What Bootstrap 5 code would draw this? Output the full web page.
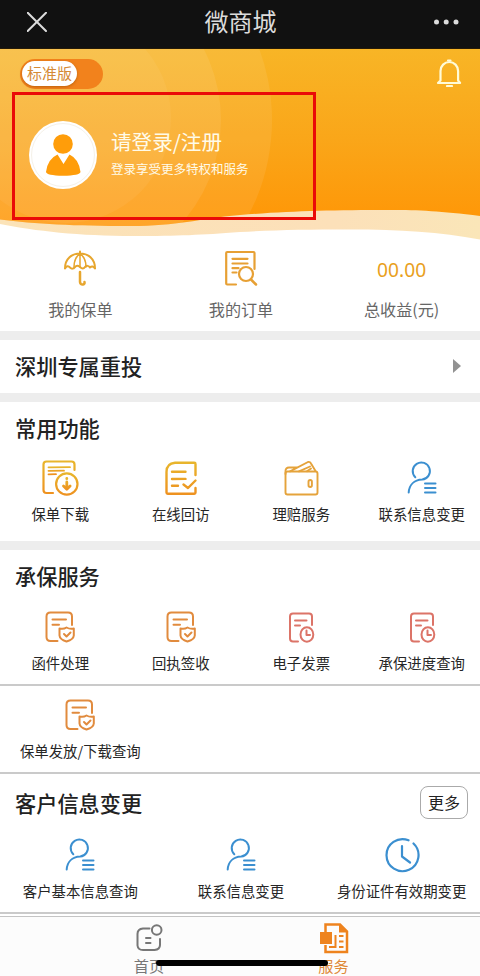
<!DOCTYPE html>
<html lang="zh-CN">
<head>
<meta charset="utf-8">
<meta name="viewport" content="width=device-width, initial-scale=1">
<title>微商城</title>
<link href="https://cdn.jsdelivr.net/npm/bootstrap@5.3.0/dist/css/bootstrap.min.css" rel="stylesheet">
<style>
body{font-family:"Noto Sans CJK SC",sans-serif;color:#262626;background:#fff;width:480px;height:976px;overflow:hidden;line-height:1.2}
svg{display:block;flex:none}
.ln{fill:none;stroke-linecap:round;stroke-linejoin:round}
.topbar{height:49px;background:#111;color:#dcdcdc;padding:0 21px 5px 27px;border-bottom:1px solid #241a08}
.topbar h1{font-size:24px;line-height:30px;font-weight:400;padding-bottom:2px}
.hero{height:191px}
.hero-bg{left:0;top:0;z-index:0}
.hero-body{z-index:1;padding:10px 18px 0 20px}
.switch-pill{width:83px;height:30px;background:#f2821c;padding:2px}
.switch-knob{width:55px;height:25px;font-size:15px;color:#d58a35;padding-bottom:2px;box-shadow:0 1px 3px #9a4c0099}
.bell{margin-bottom:2px}
.avatar-disc{width:68px;height:68px}
.login-row{margin:32px 0 0 9px;gap:14px;color:#fffbe9}
.login-title{font-size:20.6px;line-height:28px}
.login-sub{font-size:12.5px;line-height:18px;margin:5px 0 5px}
.mark-frame{left:12px;top:92px;width:304px;height:128px;border:3px solid #ea0a08;z-index:3}
.wide-row{width:482px}
.stats{height:91px;font-size:16.1px;color:#666}
.stat-top{height:60px}
.stat-top svg{margin-bottom:4px}
.amount{font-family:"Noto Sans",sans-serif;font-size:19.2px;color:#e9a01c}
.band{height:9px;background:#ededed}
.sec-title{font-size:21.2px;font-weight:500;line-height:28px;color:#222}
.link-row{height:53px;padding:0 18px 1px 15px}
.sec-head{padding:0 12px 0 15px}
.tile{font-size:14.4px}
.tile-ico{height:47px}
.tiles-a{padding-top:14px}
.tiles-a .tile-ico{height:48px}
.tiles-b{padding-top:19px}
.tiles-b .tile-ico,.tiles-c .tile-ico,.tile-solo .tile-ico{height:44px}
.tiles-c{padding-top:18px}
.tile-solo{padding-top:11px}
.tile-txt{line-height:20px;white-space:nowrap}
.rule{border-bottom:2px solid #cacaca}
.more-btn{width:48px;height:33px;padding:0 0 2px;border:1px solid #aaa;border-radius:8px;font-size:16px;color:#222}
.tabs{height:60px;margin-top:2px;padding-top:3px;background:#fcfcfc;border-top:1px solid #c4c4c4;font-size:15.2px;color:#777}
.tab-ico{height:36px}
.home-bar{left:156px;top:960px;width:172px;height:6px;background:#000;z-index:3}
</style>
<script src="https://cdn.jsdelivr.net/npm/bootstrap@5.3.0/dist/js/bootstrap.bundle.min.js"></script>
</head>
<body class="position-relative">
<svg width="0" height="0" class="position-absolute">
<defs>
<linearGradient id="gold" x1="0" y1="0" x2="0" y2="1"><stop offset="0" stop-color="#e8b52c"/><stop offset="1" stop-color="#ee9220"/></linearGradient>
<symbol id="i-person" viewBox="0 0 36 36"><g class="ln" stroke="#3b8fd0" stroke-width="2"><path d="M11.300 17.200A8.600 8.600 0 1 1 18.200 19.600C10 20 5.200 25 4.700 32.500"/><path d="M21 23.500h10.500M21 28h10.500M21 32.500h10.500"/></g></symbol>
<symbol id="i-shield" viewBox="0 0 36 36"><g class="ln" stroke="#e18b3e" stroke-width="2"><path d="M15.500 32H8.500Q4.500 32 4.500 28V7.500Q4.500 3.500 8.500 3.500H26Q30 3.500 30 7.500V16"/><path d="M10.500 10.500H24M10.500 15.800H17"/><path d="M24.500 18.500Q28 20.500 31.800 19.500V26.500Q31.500 30.500 24.500 32.500Q17.800 30.500 17.500 26.500V19.500Q21.500 20.500 24.500 18.500ZM22 25l2.500 2.500 4-4"/></g></symbol>
<symbol id="i-bill" viewBox="0 0 36 36"><g class="ln" stroke="#dc7468" stroke-width="2"><path d="M15 32.500H10Q7 32.500 7 29.500V7.500Q7 4.500 10 4.500H26Q29 4.500 29 7.500V16"/><path d="M12 11.500H23.500M12 16.500H17"/><ellipse cx="23.900" cy="25.500" rx="6.400" ry="7.300"/><path d="M23.500 21.500V26H27"/></g></symbol>
</defs>
</svg>

<header class="topbar d-flex align-items-center justify-content-between">
<svg width="20" height="20" viewBox="0 0 20 20"><path d="M.7.7 19 19M19 .7.7 19" stroke="#dcdcdc" stroke-width="2" fill="none" stroke-linecap="round"/></svg>
<h1 class="mb-0">微商城</h1>
<svg width="25" height="6" viewBox="0 0 25 6" fill="#dcdcdc"><circle cx="2.500" cy="3" r="2.500"/><circle cx="12.200" cy="3" r="2.500"/><circle cx="22" cy="3" r="2.500"/></svg>
</header>

<section class="hero position-relative">
<svg class="hero-bg position-absolute" width="480" height="191" viewBox="0 49 480 191">
<defs>
<linearGradient id="sun" x1="0" y1="0" x2="0" y2="1"><stop offset="0" stop-color="#f8b526"/><stop offset=".5" stop-color="#faa619"/><stop offset="1" stop-color="#ff9505"/></linearGradient>
<linearGradient id="foam" x1="0" y1="0" x2="1" y2="0"><stop offset="0" stop-color="#fbe3b8"/><stop offset=".7" stop-color="#fce0b9"/><stop offset="1" stop-color="#fae6b8"/></linearGradient>
<clipPath id="wave"><path d="M0 49H480V216C440 211 420 210 390 210C330 210 290 211 240 215C195 219 180 226 130 226C75 226 35 224 0 219.500Z"/></clipPath>
</defs>
<path fill="url(#foam)" d="M0 200H480V239.500C440 232 400 229.500 350 229.500C305 229.500 275 230 240 232C200 235 180 236 133 236C80 236 35 231 0 224Z"/>
<g clip-path="url(#wave)"><path fill="url(#sun)" d="M0 49H480V230H0Z"/>
<g fill="#fff"><circle cx="66" cy="120" r="206" fill-opacity=".08"/><circle cx="66" cy="120" r="155" fill-opacity=".08"/><circle cx="66" cy="118" r="105" fill-opacity=".05"/></g></g>
</svg>
<div class="hero-body position-relative">
<div class="d-flex align-items-center justify-content-between">
<div class="switch-pill rounded-pill"><div class="switch-knob rounded-pill bg-white d-flex align-items-center justify-content-center">标准版</div></div>
<svg class="bell" width="26" height="28" viewBox="0 1 26 28"><g class="ln" stroke="#fffbd8" stroke-width="2.200"><path d="M4.500 22.500V13a8.800 9 0 0 1 17.600 0v9.500l2 2.500H2Z"/><path d="M12 2.500h2.500M11 28h5"/></g></svg>
</div>
<div class="login-row d-flex align-items-center">
<svg class="avatar-disc" viewBox="0 0 68 68"><circle cx="34" cy="34" r="34" fill="#fff"/><circle cx="34" cy="34" r="31.500" fill="none" stroke="#f5f1e8"/><g fill="#ff9d0a"><circle cx="34" cy="23" r="9.800"/><path d="M28.500 33.500 34.500 43 40.500 33.500Q50 38 51.500 51Q51 54.500 34 54.800Q17.500 54.500 17 51Q18.500 38 28.500 33.500Z"/></g></svg>
<div><div class="login-title">请登录/注册</div><div class="login-sub">登录享受更多特权和服务</div></div>
</div>
</div>
</section>
<div class="mark-frame position-absolute"></div>

<section class="stats wide-row row g-0 text-center">
<div class="col-4"><div class="stat-top d-flex justify-content-center align-items-center"><svg width="34" height="38" viewBox="0 0 34 38"><g class="ln" stroke="#e7a62e" stroke-width="2"><path d="M2 19.500C2 9.500 9 4.500 17 4.500S32 9.500 32 19.500M17 2.500v2M2 19.500Q4.500 15.500 7 18.500Q9.500 21 12 18Q14 15.500 17 18Q20 21 22 18Q24.500 15.500 27 18.500Q29.500 16 32 19.500"/><path stroke-width="1.500" d="M17 4.500Q11 9 11 18M17 4.500Q23 9 23 18M17 4.500V18"/><path stroke-width="2.500" d="M17 23V33Q17.500 36 20 35.500Q22 35 21.500 33"/></g></svg></div>我的保单</div>
<div class="col-4"><div class="stat-top d-flex justify-content-center align-items-center"><svg width="34" height="38" viewBox="0 0 34 38"><g class="ln" stroke="#e7a034" stroke-width="2.200"><path d="M12 35.500H3.200Q2.200 35.500 2.200 34.500V4Q2.200 3 3.200 3H29.500Q30.500 3 30.500 4V20M8.500 9.800H23.500M8.500 14.500H23.500M8.500 19.200H14.500M8.500 23.500H12.500"/><circle cx="22" cy="25" r="7"/><path d="m27 30.500 5 5" stroke-width="2.500"/></g></svg></div>我的订单</div>
<div class="col-4"><div class="stat-top amount d-flex justify-content-center align-items-center">00.00</div>总收益(元)</div>
</section>

<div class="band"></div>
<section class="link-row d-flex align-items-center justify-content-between"><h2 class="sec-title mb-0">深圳专属重投</h2><svg width="9" height="14" viewBox="0 0 9 14"><path d="M0 0 8 7 0 14Z" fill="#929292"/></svg></section>
<div class="band"></div>

<section style="height:139px">
<div class="sec-head pt-2"><h2 class="sec-title mt-1 mb-0">常用功能</h2></div>
<div class="tiles-a wide-row row g-0 text-center">
<div class="tile col-3"><div class="tile-ico d-flex justify-content-center"><svg width="42" height="42" viewBox="0 0 42 42"><g class="ln" stroke="url(#gold)" stroke-width="2.200"><path d="M14 37H7.500Q4.500 37 4.500 34V8.500Q4.500 5.500 7.500 5.500H32.500Q35.500 5.500 35.500 8.500V14"/><path stroke-width="1.800" d="M9.500 11.300 31 11.200M9.500 14.800 25 14.700M9.500 18.300 17 18.200"/><circle cx="27.800" cy="28" r="10.700"/><path stroke-width="2.800" d="M27.800 26V33M24.500 30l3.300 3.300 3.300-3.300M27.800 22.500v.2"/></g></svg></div><div class="tile-txt">保单下载</div></div>
<div class="tile col-3"><div class="tile-ico d-flex justify-content-center"><svg width="42" height="42" viewBox="0 0 42 42"><g class="ln" stroke="url(#gold)" stroke-width="2.400"><path d="M35.500 19V8Q35.500 6.800 34.300 6.800H15Q6.500 7.500 6.500 16V36.500Q6.500 37.700 7.700 37.700H34.300Q35.500 37.700 35.500 36.500V32M12 15.800 25.500 15.700M12 23 25.500 22.900M12 29.800 18 29.700M23.500 28.500l4.500 3.500 7.500-7.500"/></g></svg></div><div class="tile-txt">在线回访</div></div>
<div class="tile col-3"><div class="tile-ico d-flex justify-content-center"><svg width="42" height="42" viewBox="0 0 42 42"><g class="ln" stroke="#e5a33b" stroke-width="1.900"><rect x="5.500" y="15.500" width="32" height="23" rx="2"/><path d="M5.500 18V15Q5.500 11.500 9 11.500H17M10 15.300 28 6Q30 5.500 31 7.500L35.500 15M19 15.300 30 10.500M27 15.300 31 12.500"/><rect x="28.500" y="24" width="3.400" height="7" rx="1.700"/></g></svg></div><div class="tile-txt">理赔服务</div></div>
<div class="tile col-3"><div class="tile-ico d-flex justify-content-center"><svg class="mt-1" width="36" height="36"><use href="#i-person"/></svg></div><div class="tile-txt">联系信息变更</div></div>
</div>
</section>
<div class="band"></div>

<section class="rule" style="height:136px">
<div class="sec-head pt-2"><h2 class="sec-title mt-1 mb-0">承保服务</h2></div>
<div class="tiles-b wide-row row g-0 text-center">
<div class="tile col-3"><div class="tile-ico d-flex justify-content-center"><svg width="36" height="36"><use href="#i-shield"/></svg></div><div class="tile-txt">函件处理</div></div>
<div class="tile col-3"><div class="tile-ico d-flex justify-content-center"><svg width="36" height="36"><use href="#i-shield"/></svg></div><div class="tile-txt">回执签收</div></div>
<div class="tile col-3"><div class="tile-ico d-flex justify-content-center"><svg width="36" height="36"><use href="#i-bill"/></svg></div><div class="tile-txt">电子发票</div></div>
<div class="tile col-3"><div class="tile-ico d-flex justify-content-center"><svg width="36" height="36"><use href="#i-bill"/></svg></div><div class="tile-txt">承保进度查询</div></div>
</div>
</section>
<section class="rule" style="height:88px">
<div class="wide-row row g-0 text-center">
<div class="tile tile-solo col-4"><div class="tile-ico d-flex justify-content-center"><svg width="36" height="36"><use href="#i-shield"/></svg></div><div class="tile-txt">保单发放/下载查询</div></div>
</div>
</section>

<section class="rule" style="height:140px">
<div class="sec-head d-flex justify-content-between align-items-center pt-2"><h2 class="sec-title mt-1 mb-0">客户信息变更</h2><button class="more-btn btn bg-white mt-1" type="button">更多</button></div>
<div class="tiles-c wide-row row g-0 text-center">
<div class="tile col-4"><div class="tile-ico d-flex justify-content-center"><svg width="36" height="36"><use href="#i-person"/></svg></div><div class="tile-txt">客户基本信息查询</div></div>
<div class="tile col-4"><div class="tile-ico d-flex justify-content-center"><svg width="36" height="36"><use href="#i-person"/></svg></div><div class="tile-txt">联系信息变更</div></div>
<div class="tile col-4"><div class="tile-ico d-flex justify-content-center"><svg width="36" height="36" viewBox="0 0 36 36"><g class="ln" stroke="#3b8fd0" stroke-width="2.200"><path d="M24.500 3.300A16 16 0 1 0 29.500 6.500M18 9v10.500l8 6"/></g></svg></div><div class="tile-txt">身份证件有效期变更</div></div>
</div>
</section>

<nav class="tabs d-flex text-center">
<div style="width:298px"><div class="tab-ico d-flex justify-content-center"><svg width="30" height="34" viewBox="0 0 30 34"><g class="ln" stroke="#777" stroke-width="2"><path d="M15.500 8.500H9Q3.500 9 3.500 14V25.500Q4 30 9 30H20.500Q26 29.500 26 25V19M12 18h4.500M12 23h4.500"/><circle cx="22.700" cy="10" r="4.800"/></g></svg></div>首页</div>
<div style="width:71px;color:#df8938"><div class="tab-ico d-flex justify-content-center"><svg width="30" height="34" viewBox="0 0 30 34"><path d="M6.500 12V4.500H21L28 11.500V32H6.500V25" fill="none" stroke="#ee831e" stroke-width="2.500"/><path d="M20 4v8.500h8.500Z" fill="#ee831e"/><path d="M1 12H13V24H1Z" fill="#ee831e"/><path d="M16.500 15V27H10M20 16h4.500M20 21.500h4.500M20 27h4.500" fill="none" stroke="#ee831e" stroke-width="2"/></svg></div>服务</div>
</nav>
<div class="home-bar position-absolute rounded-pill"></div>
</body>
</html>
